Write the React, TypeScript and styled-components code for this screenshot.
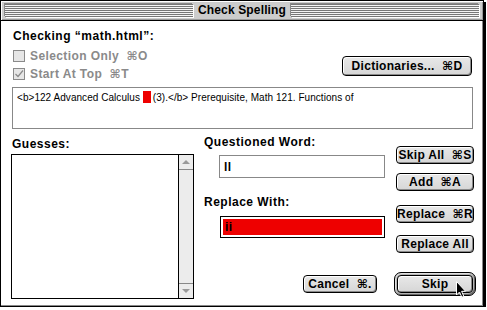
import React from "react";
import styled, { createGlobalStyle } from "styled-components";

const GlobalStyle = createGlobalStyle`
  html, body {
    margin: 0;
    padding: 0;
    background: #fff;
  }
  * {
    box-sizing: border-box;
  }
`;

const UI_FONT = `"Liberation Sans", "DejaVu Sans", Arial, sans-serif`;

const Window = styled.div`
  position: relative;
  width: 484px;
  height: 307px;
  border: 1px solid #000;
  box-shadow: 2px 2px 0 #000;
  background: #fff;
  font-family: ${UI_FONT};
  display: flex;
  flex-direction: column;
`;

const TitleBar = styled.div`
  height: 20px;
  flex: none;
  display: flex;
  align-items: center;
  padding: 0 4px 1px 4px;
  background: #cccccc;
  border-bottom: 1px solid #000;
  box-shadow: inset 1px 1px 0 #fff, inset -1px -1px 0 #999;
`;

const Stripes = styled.div`
  flex: 1;
  height: 13px;
  background: repeating-linear-gradient(to bottom, #777 0 1px, #f4f4f4 1px 2px);
  box-shadow: 1px 1px 0 #fff, -1px -1px 0 #888;
`;

const Title = styled.div`
  padding: 0 5px;
  font-size: 12px;
  font-weight: bold;
  letter-spacing: 0.15px;
  color: #000;
`;

const Content = styled.div`
  flex: 1;
  padding: 8px 10px 0 10px;
  box-shadow: inset -1px -1px 0 #888;
`;

const Heading = styled.div`
  margin-left: 2px;
  font-size: 12px;
  line-height: 15px;
  font-weight: bold;
  letter-spacing: 0.5px;
`;

const OptionsRow = styled.div`
  display: flex;
  justify-content: space-between;
  align-items: flex-start;
  margin-top: 3px;
`;

const Options = styled.div`
  display: flex;
  flex-direction: column;
  margin-left: 2px;
`;

const CheckRow = styled.div`
  height: 18px;
  display: flex;
  align-items: center;
  gap: 5px;
  font-size: 12px;
  font-weight: bold;
  letter-spacing: 0.4px;
  color: #8a8a8a;
`;

const CheckBox = styled.div`
  width: 12px;
  height: 12px;
  border: 1px solid #8a8a8a;
  background: #e6e6e6;
  display: flex;
  align-items: center;
  justify-content: center;
`;

const Button = styled.div<{ $w?: number; $mt?: number }>`
  width: ${(p) => (p.$w ? `${p.$w}px` : "auto")};
  height: 18px;
  margin-top: ${(p) => p.$mt ?? 0}px;
  display: flex;
  align-items: center;
  justify-content: center;
  border: 1px solid #000;
  border-radius: 4px;
  background: linear-gradient(to bottom, #e8e8e8, #d6d6d6);
  box-shadow: inset 1px 1px 0 #fff, inset -1px -1px 0 #8a8a8a;
  font-size: 12px;
  font-weight: bold;
  letter-spacing: 0.3px;
  color: #000;
  white-space: nowrap;
`;

const DictButton = styled(Button)`
  height: 20px;
  margin-top: 9px;
  margin-right: 1px;
`;

const Preview = styled.div`
  margin: 4px 0 0 1px;
  height: 42px;
  border: 1px solid #888;
  padding: 3px 4px;
  font-size: 10px;
  line-height: 14px;
  letter-spacing: 0.05px;
  color: #000;
  white-space: nowrap;
  overflow: hidden;
`;

const Highlight = styled.span`
  display: inline-block;
  width: 8px;
  height: 12px;
  vertical-align: -2px;
  background: #ee0000;
  margin-right: 2px;
`;

const Lower = styled.div`
  display: flex;
`;

const ListColumn = styled.div`
  width: 183px;
  flex: none;
  display: flex;
  flex-direction: column;
`;

const Label = styled.div<{ $mt: number; $ml?: number }>`
  margin-top: ${(p) => p.$mt}px;
  margin-left: ${(p) => p.$ml ?? 0}px;
  font-size: 12px;
  line-height: 15px;
  font-weight: bold;
  letter-spacing: 0.5px;
`;

const ListBox = styled.div`
  margin-top: 2px;
  height: 145px;
  border: 1px solid #000;
  display: flex;
`;

const ListBody = styled.div`
  flex: 1;
  background: #fff;
`;

const ScrollBar = styled.div`
  width: 15px;
  border-left: 1px solid #000;
  background: #ececec;
  display: flex;
  flex-direction: column;
  justify-content: space-between;
`;

const ScrollArrow = styled.div<{ $down?: boolean }>`
  height: 15px;
  display: flex;
  align-items: center;
  justify-content: center;
  border-top: ${(p) => (p.$down ? "1px solid #888" : "none")};
  border-bottom: ${(p) => (p.$down ? "none" : "1px solid #888")};
  &::after {
    content: "";
    width: 0;
    height: 0;
    border-left: 4px solid transparent;
    border-right: 4px solid transparent;
    ${(p) => (p.$down ? "border-top: 4px solid #999;" : "border-bottom: 4px solid #999;")}
  }
`;

const RightPart = styled.div`
  flex: 1;
  display: flex;
  flex-direction: column;
`;

const FieldsAndButtons = styled.div`
  display: flex;
`;

const Fields = styled.div`
  margin-left: 10px;
  width: 181px;
  display: flex;
  flex-direction: column;
`;

const Field = styled.div<{ $focused?: boolean; $mt: number }>`
  margin-top: ${(p) => p.$mt}px;
  margin-left: ${(p) => (p.$focused ? 16 : 15)}px;
  height: ${(p) => (p.$focused ? 22 : 23)}px;
  border: 1px solid ${(p) => (p.$focused ? "#000" : "#888")};
  padding: ${(p) => (p.$focused ? "2px" : "0 4px")};
  display: flex;
  align-items: center;
  font-size: 12px;
  font-weight: bold;
  letter-spacing: 0.3px;
`;

const Selection = styled.div`
  flex: 1;
  align-self: stretch;
  background: #ee0000;
  padding-left: 2px;
  display: flex;
  align-items: center;
`;

const Buttons = styled.div`
  margin-left: 11px;
  display: flex;
  flex-direction: column;
`;

const Actions = styled.div`
  display: flex;
  justify-content: flex-end;
  align-items: center;
  gap: 17px;
  margin-top: 19px;
  margin-right: -2px;
`;

const DefaultRing = styled.div`
  padding: 2px;
  border: 1px solid #000;
  border-radius: 7px;
  background: #b4b4b4;
  box-shadow: inset 1px 1px 0 #e0e0e0, inset -1px -1px 0 #666;
`;

const Cursor = styled.svg`
  position: absolute;
  left: 454px;
  top: 279px;
`;

const Cmd = "\u2318";

export default function App() {
  return (
    <>
      <GlobalStyle />
      <Window>
        <TitleBar>
          <Stripes />
          <Title>Check Spelling</Title>
          <Stripes />
        </TitleBar>
        <Content>
          <Heading>Checking “math.html”:</Heading>
          <OptionsRow>
            <Options>
              <CheckRow>
                <CheckBox />
                Selection Only &nbsp;{Cmd}O
              </CheckRow>
              <CheckRow>
                <CheckBox>
                  <svg width="10" height="10" viewBox="0 0 10 10">
                    <path d="M1.5 5 L4 7.5 L9 1.5" fill="none" stroke="#8a8a8a" strokeWidth="1.2" />
                  </svg>
                </CheckBox>
                Start At Top &nbsp;{Cmd}T
              </CheckRow>
            </Options>
            <DictButton $w={130}>Dictionaries... &nbsp;{Cmd}D</DictButton>
          </OptionsRow>
          <Preview>
            &lt;b&gt;122 Advanced Calculus <Highlight />(3).&lt;/b&gt; Prerequisite, Math 121. Functions of
          </Preview>
          <Lower>
            <ListColumn>
              <Label $mt={8} $ml={1}>Guesses:</Label>
              <ListBox>
                <ListBody />
                <ScrollBar>
                  <ScrollArrow />
                  <ScrollArrow $down />
                </ScrollBar>
              </ListBox>
            </ListColumn>
            <RightPart>
              <FieldsAndButtons>
                <Fields>
                  <Label $mt={6}>Questioned Word:</Label>
                  <Field $mt={5}>ll</Field>
                  <Label $mt={17}>Replace With:</Label>
                  <Field $mt={6} $focused>
                    <Selection>ii</Selection>
                  </Field>
                </Fields>
                <Buttons>
                  <Button $w={78} $mt={17}>Skip All &nbsp;{Cmd}S</Button>
                  <Button $w={78} $mt={9}>Add &nbsp;{Cmd}A</Button>
                  <Button $w={78} $mt={14}>Replace &nbsp;{Cmd}R</Button>
                  <Button $w={78} $mt={12}>Replace All</Button>
                </Buttons>
              </FieldsAndButtons>
              <Actions>
                <Button $w={74}>Cancel &nbsp;{Cmd}.</Button>
                <DefaultRing>
                  <Button $w={76}>Skip</Button>
                </DefaultRing>
              </Actions>
            </RightPart>
          </Lower>
        </Content>
        <Cursor width="12" height="19" viewBox="0 0 12 19">
          <path
            d="M1.5 1.5 L1.5 15 L4.5 12 L6.8 17.2 L8.8 16.3 L6.6 11.3 L10.6 11.3 Z"
            fill="#000"
            stroke="#fff"
            strokeWidth="1"
          />
        </Cursor>
      </Window>
    </>
  );
}
